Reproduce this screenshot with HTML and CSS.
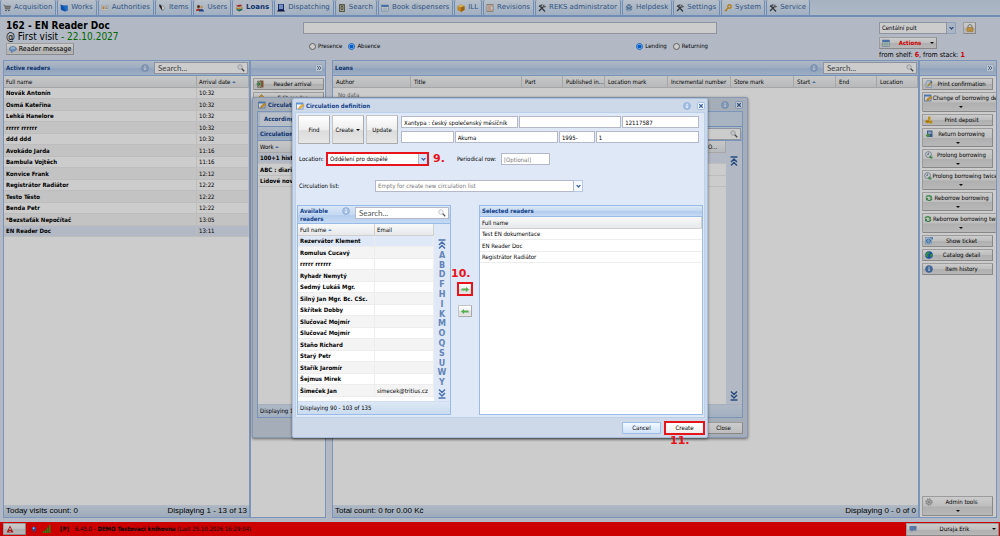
FILE: index.html
```html
<!DOCTYPE html>
<html lang="en">
<head>
<meta charset="utf-8">
<title>Loans</title>
<link rel="stylesheet" href="styles.css">
</head>
<body>
<svg class="sprite" aria-hidden="true">
  <symbol id="cart" viewBox="0 0 16 16"><path d="M1 2h2l2 8h8l2-6H4" fill="#9a9a9a" stroke="#777" stroke-width="1.5"/><circle cx="6" cy="13" r="1.6" fill="#555"/><circle cx="12" cy="13" r="1.6" fill="#555"/></symbol>
  <symbol id="folder" viewBox="0 0 16 16"><path d="M1 1l6 2 8 0v10l-5 2L2 12z" fill="#1267d8"/><path d="M1 1l5 4 9-2v10l-5 2-1-8z" fill="#2a86f0"/></symbol>
  <symbol id="card" viewBox="0 0 16 16"><rect x="1" y="3" width="14" height="10" fill="#f6f0e0" stroke="#b9c4d6"/><rect x="3" y="5" width="4" height="5" fill="#e09a55"/><path d="M9 6h4M9 9h4" stroke="#6c93c9" stroke-width="1.5"/></symbol>
  <symbol id="pen" viewBox="0 0 16 16"><path d="M2 1l4 1 6 8-3 4-6-8z" fill="#333"/><path d="M7 2l7 6-5 6" fill="#fff" stroke="#888"/></symbol>
  <symbol id="users" viewBox="0 0 16 16"><circle cx="5" cy="5" r="3" fill="#6b3c1c"/><path d="M0 14c0-7 10-7 10 0z" fill="#d1402a"/><circle cx="11" cy="6" r="3" fill="#e8b87e"/><path d="M6 15c0-7 10-7 10 0z" fill="#2c55a8"/></symbol>
  <symbol id="books" viewBox="0 0 16 16"><path d="M2 3l9-2 4 3-9 2z" fill="#c43c2c"/><path d="M2 6l4 2 9-2v2l-9 3-4-2z" fill="#e9a832"/><path d="M3 9l4 2 8-2v3l-7 3-5-3z" fill="#2f7f6c"/></symbol>
  <symbol id="monitor" viewBox="0 0 16 16"><rect x="2" y="0" width="12" height="12" fill="#26388c"/><rect x="4" y="1" width="8" height="9" fill="#8eb2e8"/><path d="M0 15l2-3h12l2 3z" fill="#111c46"/></symbol>
  <symbol id="cabinet" viewBox="0 0 16 16"><rect x="2" y="0" width="12" height="16" rx="1" fill="#73735f"/><path d="M4 3h8v4H4zM4 9h8v5H4z" fill="#c4c5aa"/><path d="M6 5h4M6 11h4" stroke="#444" stroke-width="1.5"/></symbol>
  <symbol id="table" viewBox="0 0 16 16"><rect x="1" y="2" width="14" height="12" fill="#fff" stroke="#7593bb"/><path d="M1 2h14v4H1z" fill="#5c8dcc"/><path d="M1 10h14M6 6v8M10 6v8" stroke="#8da9cf"/></symbol>
  <symbol id="calendar" viewBox="0 0 16 16"><rect x="1" y="2" width="14" height="13" fill="#cfe6cf" stroke="#7593bb"/><path d="M1 2h14v4H1z" fill="#5c8dcc"/><path d="M1 10h14M6 6v9M10 6v9" stroke="#8da9cf"/></symbol>
  <symbol id="box" viewBox="0 0 16 16"><path d="M1 4l7-3 7 3v8l-7 4-7-4z" fill="#e9a52b"/><path d="M1 4l7 3 7-3-7-3z" fill="#ffdc79"/><path d="M8 7v9l7-4V4z" fill="#c57b18"/></symbol>
  <symbol id="doc" viewBox="0 0 16 16"><rect x="2" y="1" width="12" height="14" fill="#fff" stroke="#9b8a78" stroke-width="1.5"/><path d="M4 4h8M4 8h6M4 12h8" stroke="#c36f43" stroke-width="1.6"/></symbol>
  <symbol id="tools" viewBox="0 0 16 16"><path d="M2 14L12 4M3 3l11 12" stroke="#45484e" stroke-width="2.6"/><path d="M1 5l5-4 4 0-5 6z" fill="#555b64"/><path d="M10 5a3 3 0 0 1 3-4l0 3 3 0a3 3 0 0 1-4 3z" fill="#777"/></symbol>
  <symbol id="help" viewBox="0 0 16 16"><circle cx="8" cy="8" r="7" fill="#a8c1de"/><path d="M2 5l5 3-3 4M14 5L9 8l4 4M5 2h6" stroke="#49759f" stroke-width="2" fill="none"/></symbol>
  <symbol id="key" viewBox="0 0 16 16"><circle cx="11" cy="5" r="3.5" fill="none" stroke="#e0a020" stroke-width="2.6"/><path d="M8 8l-6 6M4 12l2 2" stroke="#e0a020" stroke-width="2.6"/></symbol>
  <symbol id="bubble" viewBox="0 0 16 16"><path d="M8 3c9 0 9 9 1 9l-4 3v-3c-7-1-6-9 3-9z" fill="#86b8ea" stroke="#3b70ad"/><path d="M4 6h8" stroke="#e9f5ff" stroke-width="2"/></symbol>
  <symbol id="info" viewBox="0 0 16 16"><circle cx="8" cy="8" r="7" fill="#a4bfe3" stroke="#7b9fcf"/><path d="M8 7v5M8 3.5v2" stroke="#fff" stroke-width="2.4"/></symbol>
  <symbol id="infodark" viewBox="0 0 16 16"><circle cx="8" cy="8" r="7" fill="#5583c3" stroke="#426ba8"/><path d="M8 7v5M8 3.5v2" stroke="#fff" stroke-width="2.4"/></symbol>
  <symbol id="lens" viewBox="0 0 16 16"><circle cx="6" cy="6" r="4.5" fill="#f3f8fd" stroke="#b1b1b1" stroke-width="1.4"/><path d="M9.500 9.500l5 5" stroke="#555" stroke-width="2.6"/></symbol>
  <symbol id="edit" viewBox="0 0 16 16"><rect x="1" y="2" width="13" height="12" fill="#fff" stroke="#4e7fbd" stroke-width="1.4"/><path d="M1 2h13v3H1z" fill="#5f94d6"/><path d="M5 14l1-4 7-6 3 3-7 6z" fill="#eeb03c" stroke="#b87818" stroke-width=".7"/></symbol>
  <symbol id="pencil" viewBox="0 0 16 16"><path d="M1 15l2-6 8-8 4 4-8 8z" fill="#f0b640" stroke="#a87516"/></symbol>
  <symbol id="door" viewBox="0 0 16 16"><path d="M8 1h7v14H8z" fill="#a06e3d"/><path d="M3 2h7v13H3z" fill="#b9b39c" stroke="#776"/><path d="M1 8h6M4 5l4 3-4 4" stroke="#2d9440" stroke-width="2" fill="none"/></symbol>
  <symbol id="close" viewBox="0 0 16 16"><rect x="1" y="1" width="14" height="14" rx="3" fill="#f3f8ff" stroke="#8cafe0" stroke-width="1.4"/><path d="M4.500 4.500l7 7M11.500 4.500l-7 7" stroke="#37629f" stroke-width="2.4"/></symbol>
  <symbol id="expand" viewBox="0 0 16 16"><rect x="1" y="1" width="14" height="14" rx="2" fill="#edf4fd" stroke="#a5c1e6"/><path d="M4 4l4 4-4 4M8 4l4 4-4 4" fill="none" stroke="#43699f" stroke-width="1.6"/></symbol>
  <symbol id="down" viewBox="0 0 10 6"><path d="M0 0h3l2 2 2-2h3L5 6z" fill="#3c5f98"/></symbol>
  <symbol id="lock" viewBox="0 0 16 16"><path d="M4 8V5a4 4 0 0 1 8 0v3" fill="none" stroke="#999" stroke-width="2"/><rect x="2" y="7" width="12" height="8" rx="1" fill="#e9b44c" stroke="#b98527"/></symbol>
  <symbol id="print" viewBox="0 0 16 16"><path d="M4 1h9v14H2V4z" fill="#d9e8f8" stroke="#7f9fc4"/><path d="M4 13l2-4 6-6 3 2-7 7z" fill="#d2a53b"/><path d="M10 2l5 2-2 3z" fill="#3e74ba"/></symbol>
  <symbol id="coins" viewBox="0 0 16 16"><path d="M6 1h5v7H6z" fill="#f3c231"/><ellipse cx="5" cy="11" rx="4.500" ry="3.500" fill="#e4a416"/><ellipse cx="11" cy="12" rx="4.500" ry="3.500" fill="#f1bc31"/><path d="M2 11h6M8 12h6M7 4h3" stroke="#b67c0d"/></symbol>
  <symbol id="return" viewBox="0 0 16 16"><rect x="4" y="1" width="11" height="13" rx="1" fill="#4770aa"/><path d="M6 3h7v5H6z" fill="#a9c6e9"/><path d="M1 11l5-4v2h4v4H6v2z" fill="#63ad5a"/></symbol>
  <symbol id="clock" viewBox="0 0 16 16"><circle cx="7" cy="7" r="6" fill="#eef3f8" stroke="#8b99ab" stroke-width="1.6"/><path d="M7 3v4H4" fill="none" stroke="#56677f" stroke-width="1.2"/><path d="M8 12l4-4v3h3v4h-5z" fill="#5aa865"/></symbol>
  <symbol id="cycle" viewBox="0 0 16 16"><path d="M1 7c1-6 9-6 11-3l2-1v6H9l2-2c-2-3-6-3-7 0z" fill="#5daf68"/><path d="M15 9c-1 6-9 6-11 3l-2 1V8h5l-2 2c2 3 6 2 7-1z" fill="#4a9957"/></symbol>
  <symbol id="ticket" viewBox="0 0 16 16"><rect x="1" y="1" width="12" height="13" fill="#d4e8fc" stroke="#6da0da"/><circle cx="7" cy="8" r="4" fill="none" stroke="#327bca" stroke-width="1.8"/><path d="M3 8h8M10 2l5-1v4" stroke="#327bca" stroke-width="1.5" fill="none"/></symbol>
  <symbol id="globe" viewBox="0 0 16 16"><circle cx="8" cy="8" r="7.500" fill="#1c66cb"/><path d="M3 3l5-2 1 4-3 2 1 4-3 2-3-5zM10 7l4-2 1 4-4 5z" fill="#45b04f"/></symbol>
  <symbol id="gear" viewBox="0 0 16 16"><circle cx="8" cy="8" r="5" fill="#d6d6d6" stroke="#999" stroke-width="1.500"/><circle cx="8" cy="8" r="6.500" fill="none" stroke="#999" stroke-width="2" stroke-dasharray="2.500 2.600"/><circle cx="8" cy="8" r="2" fill="#999"/></symbol>
  <symbol id="first" viewBox="0 0 16 20"><path d="M1 2h14M2 12l6-6 6 6M2 19l6-6 6 6" fill="none" stroke="currentColor" stroke-width="3"/></symbol>
  <symbol id="last" viewBox="0 0 16 20"><path d="M1 18h14M2 8l6 6 6-6M2 1l6 6 6-6" fill="none" stroke="currentColor" stroke-width="3"/></symbol>
  <symbol id="right" viewBox="0 0 16 10"><path d="M1 3h9V0l6 5-6 5V7H1z" fill="#55ae52"/></symbol>
  <symbol id="left" viewBox="0 0 16 10"><path d="M15 3H6V0L0 5l6 5V7h9z" fill="#55ae52"/></symbol>
  <symbol id="warn" viewBox="0 0 16 16"><path d="M8 1l7 14H1z" fill="#d22626"/><path d="M8 6v4M8 12v2" stroke="#fff" stroke-width="2"/></symbol>
  <symbol id="pin" viewBox="0 0 16 16"><circle cx="8" cy="6" r="5" fill="#3b5fc4"/><circle cx="7" cy="5" r="2" fill="#dbe5ff"/><path d="M8 10v5" stroke="#3b4f92" stroke-width="3"/></symbol>
  <symbol id="signal" viewBox="0 0 16 16"><path d="M0 12h3v4H0zM4 9h3v7H4zM8 5h3v11H8zM12 0h3v16h-3z" fill="#2ea117"/></symbol>
  <symbol id="chat" viewBox="0 0 16 16"><path d="M1 2h14v9H8l-3 4v-4H1z" fill="#6f94cc"/></symbol>
</svg>

<div class="app">
  <nav class="tabs">
    <a class="tab" href="#"><svg><use href="#cart"/></svg>Acquisition</a>
    <a class="tab" href="#"><svg><use href="#folder"/></svg>Works</a>
    <a class="tab" href="#"><svg><use href="#card"/></svg>Authorities</a>
    <a class="tab" href="#"><svg><use href="#pen"/></svg>Items</a>
    <a class="tab" href="#"><svg><use href="#users"/></svg>Users</a>
    <a class="tab active" href="#"><svg><use href="#books"/></svg>Loans</a>
    <a class="tab" href="#"><svg><use href="#monitor"/></svg>Dispatching</a>
    <a class="tab" href="#"><svg><use href="#cabinet"/></svg>Search</a>
    <a class="tab" href="#"><svg><use href="#table"/></svg>Book dispensers</a>
    <a class="tab" href="#"><svg><use href="#box"/></svg>ILL</a>
    <a class="tab" href="#"><svg><use href="#doc"/></svg>Revisions</a>
    <a class="tab" href="#"><svg><use href="#tools"/></svg>REKS administrator</a>
    <a class="tab" href="#"><svg><use href="#help"/></svg>Helpdesk</a>
    <a class="tab" href="#"><svg><use href="#tools"/></svg>Settings</a>
    <a class="tab" href="#"><svg><use href="#key"/></svg>System</a>
    <a class="tab" href="#"><svg><use href="#tools"/></svg>Service</a>
  </nav>

  <header class="top">
    <div class="reader">
      <h1>162 - EN Reader Doc</h1>
      <p>@ First visit <span class="ok">- 22.10.2027</span></p>
      <button class="btn message"><svg><use href="#bubble"/></svg>Reader message</button>
    </div>
    <div class="lookup">
      <input class="field" type="text" aria-label="Code">
      <div class="modes">
        <div class="mode"><label><input type="radio" name="place">Presence</label><label><input type="radio" name="place" checked>Absence</label></div>
        <div class="mode"><label><input type="radio" name="kind" checked>Lending</label><label><input type="radio" name="kind">Returning</label></div>
      </div>
    </div>
    <div class="desk">
      <div class="desk-row">
        <span class="combo"><select class="field" aria-label="Desk"><option>Centální pult</option></select><span class="trigger"><svg><use href="#down"/></svg></span></span>
        <button class="btn lock" aria-label="Lock"><svg><use href="#lock"/></svg></button>
      </div>
      <button class="btn actions"><svg><use href="#calendar"/></svg><span>Actions</span><i class="caret"></i></button>
      <p>from shelf: <b>6</b>, from stack: <b>1</b></p>
    </div>
  </header>

  <main class="work">
    <section class="panel readers">
      <div class="bar"><h2>Active readers</h2><svg class="ico"><use href="#info"/></svg><span class="search"><input type="text" placeholder="Search..." aria-label="Search readers"><svg><use href="#lens"/></svg></span></div>
      <div class="fill">
        <table class="grid striped">
          <colgroup><col><col class="w-arrival"></colgroup>
          <thead><tr><th>Full name</th><th>Arrival date <i class="sort"></i></th></tr></thead>
          <tbody>
            <tr><td>Novák Antonín</td><td>10:32</td></tr>
            <tr><td>Osmá Kateřina</td><td>10:32</td></tr>
            <tr><td>Lehká Hanelore</td><td>10:32</td></tr>
            <tr><td>rrrrr rrrrrr</td><td>10:32</td></tr>
            <tr><td>ddd ddd</td><td>10:32</td></tr>
            <tr><td>Avokádo Jarda</td><td>11:16</td></tr>
            <tr><td>Bambula Vojtěch</td><td>11:16</td></tr>
            <tr><td>Konvice Frank</td><td>12:12</td></tr>
            <tr><td>Registrátor Radiátor</td><td>12:22</td></tr>
            <tr><td>Testo Těsto</td><td>12:22</td></tr>
            <tr><td>Benda Petr</td><td>12:22</td></tr>
            <tr><td>*Bezstaťák Nepočítač</td><td>13:05</td></tr>
            <tr class="selected"><td>EN Reader Doc</td><td>13:11</td></tr>
          </tbody>
        </table>
      </div>
      <div class="foot"><span>Today visits count: 0</span><span>Displaying 1 - 13 of 13</span></div>
    </section>

    <section class="panel side reader-tools">
      <div class="bar"><svg class="ico end"><use href="#expand"/></svg></div>
      <div class="fill stack">
        <button class="btn tool"><svg><use href="#door"/></svg><span>Reader arrival</span></button>
        <button class="btn tool"><svg><use href="#pencil"/></svg><span>Edit reader</span></button>
      </div>
    </section>

    <section class="panel loans">
      <div class="bar"><h2>Loans</h2><svg class="ico"><use href="#info"/></svg><span class="search"><input type="text" placeholder="Search..." aria-label="Search loans"><svg><use href="#lens"/></svg></span></div>
      <div class="fill">
        <table class="grid lined">
          <colgroup><col class="w-author"><col><col class="w-part"><col class="w-date"><col class="w-mark"><col class="w-mark"><col class="w-mark"><col class="w-date"><col class="w-part"><col class="w-part"></colgroup>
          <thead><tr><th>Author</th><th>Title</th><th>Part</th><th>Published in...</th><th>Location mark</th><th>Incremental number</th><th>Store mark</th><th>Start <i class="sort"></i></th><th>End</th><th>Location</th></tr></thead>
        </table>
        <p class="empty">No data</p>
      </div>
      <div class="foot"><span>Total count: 0 for 0.00 Kč</span><span>Displaying 0 - 0 of 0</span></div>
    </section>

    <section class="panel side loan-tools">
      <div class="bar"><svg class="ico end"><use href="#expand"/></svg></div>
      <div class="fill stack">
        <button class="btn tool"><svg><use href="#print"/></svg><span>Print confirmation</span></button>
        <button class="btn tool menu wide"><svg><use href="#edit"/></svg><span>Change of borrowing de</span><i class="caret"></i></button>
        <button class="btn tool"><svg><use href="#coins"/></svg><span>Print deposit</span></button>
        <button class="btn tool menu"><svg><use href="#return"/></svg><span>Return borrowing</span><i class="caret"></i></button>
        <button class="btn tool menu"><svg><use href="#clock"/></svg><span>Prolong borrowing</span><i class="caret"></i></button>
        <button class="btn tool menu wide"><svg><use href="#clock"/></svg><span>Prolong borrowing twice</span><i class="caret"></i></button>
        <button class="btn tool menu"><svg><use href="#cycle"/></svg><span>Reborrow borrowing</span><i class="caret"></i></button>
        <button class="btn tool menu wide"><svg><use href="#cycle"/></svg><span>Reborrow borrowing twi</span><i class="caret"></i></button>
        <button class="btn tool"><svg><use href="#ticket"/></svg><span>Show ticket</span></button>
        <button class="btn tool"><svg><use href="#globe"/></svg><span>Catalog detail</span></button>
        <button class="btn tool"><svg><use href="#infodark"/></svg><span>Item history</span></button>
        <button class="btn tool menu last"><svg><use href="#gear"/></svg><span>Admin tools</span><i class="caret"></i></button>
      </div>
    </section>
  </main>

  <footer class="status">
    <button class="btn alert" aria-label="Alerts"><svg><use href="#warn"/></svg></button>
    <svg class="pin"><use href="#pin"/></svg>
    <svg class="signal"><use href="#signal"/></svg>
    <b>[P]</b>
    <span class="build">6.45.0 - <b>DEMO Testovací knihovna</b> (Last 25.10.2026 16:29:04)</span>
    <button class="btn account"><svg><use href="#chat"/></svg><span>Duraja Erik</span><i class="caret"></i></button>
  </footer>
</div>

<section class="window back">
  <div class="title"><svg class="ico"><use href="#edit"/></svg><h2>Circulatio</h2><svg class="ico"><use href="#info"/></svg><button class="plain" aria-label="Close"><svg class="ico"><use href="#close"/></svg></button></div>
  <div class="back-body">
    <div class="subtabs"><a href="#">According</a></div>
    <div class="bar"><h2>Circulation</h2><span class="search"><input type="text" aria-label="Search circulation"><svg><use href="#lens"/></svg></span></div>
    <div class="back-main">
      <table class="grid">
        <colgroup><col><col class="w-more"></colgroup>
        <thead><tr><th>Work <i class="sort"></i></th><th>O...</th></tr></thead>
        <tbody>
          <tr class="selected"><td>100+1 hist</td><td></td></tr>
          <tr><td>ABC : diario</td><td></td></tr>
          <tr><td>Lidové novi</td><td></td></tr>
        </tbody>
      </table>
      <div class="jump"><svg><use href="#first"/></svg><svg><use href="#last"/></svg></div>
    </div>
    <div class="pager">Displaying 1</div>
  </div>
  <div class="window-foot"><button class="btn action">Close</button></div>
</section>

<div class="mask"></div>

<section class="window front" role="dialog" aria-label="Circulation definition">
  <div class="title"><svg class="ico"><use href="#edit"/></svg><h2>Circulation definition</h2><svg class="ico"><use href="#info"/></svg><button class="plain" aria-label="Close dialog"><svg class="ico"><use href="#close"/></svg></button></div>
  <div class="front-body">
    <div class="work-form">
      <button class="btn big">Find</button>
      <button class="btn big">Create<i class="caret"></i></button>
      <button class="btn big">Update</button>
      <div class="work-fields">
        <div class="line names"><input class="field" aria-label="Title" value="Xantypa : český společenský měsíčník"><input class="field" aria-label="Subtitle"><input class="field" aria-label="ISSN" value="12117587"></div>
        <div class="line details"><input class="field" aria-label="Author"><input class="field" aria-label="Publisher" value="Akuma"><input class="field" aria-label="Year" value="1995-"><input class="field" aria-label="Volume" value="1"></div>
      </div>
    </div>
    <div class="row place">
      <label for="location">Location:</label>
      <span class="combo marked"><select class="field" id="location"><option>Oddělení pro dospělé</option></select><span class="trigger"><svg><use href="#down"/></svg></span></span>
      <strong class="step">9.</strong>
      <label for="period">Periodical row:</label>
      <input class="field period" id="period" placeholder="[Optional]">
    </div>
    <div class="row list">
      <label for="list">Circulation list:</label>
      <span class="combo"><select class="field hint" id="list"><option>Empty for create new circulation list</option></select><span class="trigger light"><svg><use href="#down"/></svg></span></span>
    </div>
    <div class="transfer">
      <section class="box available">
        <div class="bar tall"><h2>Available readers</h2><svg class="ico"><use href="#info"/></svg><span class="search"><input type="text" placeholder="Search..." aria-label="Search available readers"><svg><use href="#lens"/></svg></span></div>
        <div class="available-main">
          <table class="grid striped">
            <colgroup><col><col class="w-email"></colgroup>
            <thead><tr><th>Full name <i class="sort"></i></th><th>Email</th></tr></thead>
            <tbody>
              <tr class="selected"><td>Rezervátor Klement</td><td></td></tr>
              <tr><td>Romulus Cucavý</td><td></td></tr>
              <tr><td>rrrrr rrrrrr</td><td></td></tr>
              <tr><td>Ryhadr Nemytý</td><td></td></tr>
              <tr><td>Sedmý Lukáš Mgr.</td><td></td></tr>
              <tr><td>Silný Jan Mgr. Bc. CSc.</td><td></td></tr>
              <tr><td>Skřítek Dobby</td><td></td></tr>
              <tr><td>Slučovač Mojmír</td><td></td></tr>
              <tr><td>Slučovač Mojmír</td><td></td></tr>
              <tr><td>Staňo Richard</td><td></td></tr>
              <tr><td>Starý Petr</td><td></td></tr>
              <tr><td>Stařík Jaromír</td><td></td></tr>
              <tr><td>Šejmus Mirek</td><td></td></tr>
              <tr><td>Šimeček Jan</td><td>simecek@tritius.cz</td></tr>
            </tbody>
          </table>
          <div class="jump letters"><svg><use href="#first"/></svg><span>A</span><span>B</span><span>D</span><span>F</span><span>H</span><span>I</span><span>K</span><span>M</span><span>O</span><span>Q</span><span>S</span><span>U</span><span>W</span><span>Y</span><svg><use href="#last"/></svg></div>
        </div>
        <div class="pager">Displaying 90 - 103 of 135</div>
      </section>
      <div class="movers">
        <strong class="step">10.</strong>
        <button class="btn move marked" aria-label="Add reader"><svg><use href="#right"/></svg></button>
        <button class="btn move" aria-label="Remove reader"><svg><use href="#left"/></svg></button>
      </div>
      <section class="box chosen">
        <div class="bar"><h2>Selected readers</h2></div>
        <table class="grid light">
          <thead><tr><th>Full name</th></tr></thead>
          <tbody><tr><td>Test EN dokumentace</td></tr><tr><td>EN Reader Doc</td></tr><tr><td>Registrátor Radiátor</td></tr></tbody>
        </table>
      </section>
    </div>
  </div>
  <div class="window-foot">
    <button class="btn action focus">Cancel</button>
    <span class="final"><button class="btn action marked">Create</button><strong class="step below">11.</strong></span>
  </div>
</section>
</body>
</html>
```

FILE: styles.css
```css
* { box-sizing: border-box; }
html, body { height: 100%; }
body {
  margin: 0;
  overflow: hidden;
  position: relative;
  background: #dfe8f6;
  color: #000;
  font: 6px/8px "DejaVu Sans Condensed", "DejaVu Sans", sans-serif;
}
h1, h2, p { margin: 0; }
button, input, select { font: inherit; color: inherit; margin: 0; min-width: 0; }
a { color: inherit; text-decoration: none; }
svg { flex: none; width: 8px; height: 8px; }
.sprite { position: absolute; width: 0; height: 0; }
.app { display: flex; flex-direction: column; height: 100%; }

/* tabs */
.tabs {
  display: flex;
  gap: 1px;
  height: 17px;
  border-bottom: 2px solid #8db2e3;
  background: linear-gradient(#cfdef2, #dbe7f7);
  font: 7px/9px "DejaVu Sans", sans-serif;
  flex: none;
}
.tab {
  display: flex;
  align-items: center;
  gap: 3px;
  padding: 0 3px 0 2px;
  border: 1px solid #8db2e3;
  border-width: 0 1px;
  border-radius: 2px 2px 0 0;
  background: linear-gradient(#e6f0fc, #c9dcf3);
  color: #416aa3;
  white-space: nowrap;
}
.tab.active { color: #15428b; font-weight: bold; background: #dfe8f6; }

/* buttons and fields */
.btn {
  display: flex;
  align-items: center;
  justify-content: center;
  padding: 0 2px;
  border: 1px solid #c4c4c4;
  border-right-color: #aaa;
  border-bottom-color: #aaa;
  border-radius: 1px;
  background: linear-gradient(#fff, #eee 50%, #dcdcdc 55%, #e6e6e6);
  white-space: nowrap;
}
.plain { display: flex; padding: 0; border: 0; background: none; }
.caret { border: 2px solid transparent; border-top-color: #111; border-bottom: 0; }
.field {
  height: 12px;
  padding: 0 2px;
  border: 1px solid #b5b8c8;
  border-radius: 0;
  background: #fff;
  outline: 0;
}
.combo { display: flex; height: 12px; }
.combo select { flex: 1; appearance: none; height: auto; }
.combo .trigger {
  display: flex;
  align-items: center;
  justify-content: center;
  width: 9px;
  border: 1px solid #b5c8e4;
  border-left: 0;
  background: #d5e4f8;
}
.combo .trigger.light { background: #f4f7fb; }
.combo .trigger svg { width: 5px; height: 3px; }
.marked { outline: 2px solid #e8141c; outline-offset: -1px; border-radius: 0; }
.step { color: #e8141c; font: bold 11px/12px "DejaVu Sans", sans-serif; }

/* page header */
.top { display: flex; padding: 3px 20px 0 6px; height: 43px; flex: none; }
.reader { flex: 0 0 297px; }
.reader h1 { font-size: 10px; line-height: 11px; }
.reader p { font-size: 10px; line-height: 12px; }
.ok { color: #008000; }
.message { width: 68px; height: 12px; gap: 2px; font-size: 7px; }
.lookup { flex: 0 1 414px; padding-top: 2px; }
.lookup .field { width: 100%; display: block; }
.modes { display: flex; justify-content: space-between; padding: 8px 9px 0 6px; }
.mode { display: flex; gap: 6px; }
.mode label { display: flex; align-items: center; gap: 2px; }
.mode input { width: 7px; height: 7px; }
.desk { margin-left: auto; width: 101px; padding-top: 2px; }
.desk-row { display: flex; gap: 7px; }
.desk .combo { width: 77px; }
.lock { width: 13px; height: 12px; }
.actions { width: 58px; height: 12px; margin: 3px 0 2px; color: #f00; font-weight: bold; }
.actions span { flex: 1; }
.desk p { font-size: 7px; white-space: nowrap; }
.desk b { color: #f00; }

/* work area */
.work { flex: 1; min-height: 0; display: flex; padding: 0 3px 4px; }
.panel { display: flex; flex-direction: column; border: 1px solid #99bbe8; min-width: 0; }
.readers { flex: 0 0 247px; }
.reader-tools { flex: 0 0 76px; margin-right: 6px; }
.loans { flex: 1; }
.loan-tools { flex: 0 0 78px; }
.bar {
  display: flex;
  align-items: center;
  flex: none;
  height: 15px;
  padding: 0 1px 0 2px;
  border-bottom: 1px solid #99bbe8;
  background: linear-gradient(#dae7f6, #c5d9f1 50%, #b4cdee 55%, #c6daf3);
}
h2 { flex: 1; font-size: 6px; line-height: 8px; color: #15428b; }
.ico { width: 8px; height: 8px; }
.ico.end { margin: 0 1px 0 auto; }
.search {
  display: flex;
  align-items: center;
  width: 94px;
  height: 12px;
  margin-left: 5px;
  padding: 0 2px;
  border: 1px solid #b5b8c8;
  background: #fff;
}
.search input { flex: 1; padding: 0 1px; border: 0; outline: 0; background: none; font: 8px/10px Lato, sans-serif; }
.search input::placeholder { color: #555; }
.fill { flex: 1; min-height: 0; background: #fff; overflow: hidden; }
.stack { display: flex; flex-direction: column; align-items: flex-start; gap: 2px; padding: 2px 0 1px 2px; }
.foot {
  display: flex;
  justify-content: space-between;
  align-items: center;
  flex: none;
  height: 12px;
  padding: 0 2px;
  background: linear-gradient(#dce8f6, #c5d6ea);
  font: 8px/10px "Liberation Sans", sans-serif;
}
.tool { display: grid; grid-template-columns: 8px 1fr; width: 71px; height: 12px; padding: 0 2px; flex: none; }
.tool span { text-align: center; }
.tool.menu { height: 19px; grid-template-rows: 10px 7px; }
.tool.menu .caret { grid-column: 1 / 3; justify-self: center; }
.tool.menu.wide { height: 20px; width: 74px; padding-right: 0; border-right: 0; }
.tool.wide span { text-align: left; padding-left: 1px; }
.tool.menu.last { height: 20px; margin-top: auto; }
.empty { padding: 3px 5px; color: #777; }

/* grids */
.grid { width: 100%; table-layout: fixed; border-collapse: separate; border-spacing: 0; background: #fff; }
.grid th, .grid td { padding: 0 2px; text-align: left; white-space: nowrap; overflow: hidden; line-height: 8px; }
.grid th {
  height: 12px;
  border-right: 1px solid #d0d0d0;
  border-bottom: 1px solid #d0d0d0;
  background: linear-gradient(#f9f9f9, #e6e8ea);
  font-weight: normal;
}
.grid td { height: 11px; border-bottom: 1px solid #ededed; }
.grid tr:nth-child(even) td { height: 12px; }
.grid td:first-child { font-weight: bold; }
.grid.light td:first-child { font-weight: normal; }
.grid.striped td { border-right: 1px solid #ededed; }
.grid.striped tr:nth-child(even) td { background: #f4f4f4; }
.grid .selected td, .grid.striped .selected td { background: #dfe8f6; }
.sort { display: inline-block; border: 2px solid transparent; border-bottom-color: #5d8dcc; border-top: 0; vertical-align: middle; }
.grid.lined th { padding-left: 3px; }
.w-arrival { width: 52px; }
.w-author { width: 78px; }
.w-part { width: 41px; }
.w-mark { width: 63px; }
.w-date { width: 42px; }
.w-email { width: 59px; }
.w-more { width: 20px; }

/* status bar */
.status {
  display: flex;
  align-items: center;
  flex: none;
  height: 14px;
  padding: 0 1px 0 3px;
  background: #f00;
}
.alert { width: 23px; height: 12px; justify-content: flex-start; margin-right: 4px; }
.pin { width: 8px; height: 7px; }
.signal { width: 10px; height: 8px; margin: 0 8px 0 4px; }
.build { margin-left: 6px; }
.account { width: 93px; height: 13px; margin-left: auto; }
.account span { flex: 1; }

.mask { position: absolute; inset: 0; background: rgba(0, 0, 0, .2); }

/* windows */
.window {
  position: absolute;
  display: flex;
  flex-direction: column;
  border: 1px solid #a9bfdc;
  border-radius: 2px;
  background: #ced9e7;
  box-shadow: 0 1px 3px rgba(0, 0, 0, .5);
}
.back { left: 252px; top: 97px; width: 496px; height: 341px; padding: 0 4px; }
.front { left: 292px; top: 98px; width: 416px; height: 340px; padding: 0 2px; background: #cdd9e9; }
.title { display: flex; align-items: center; gap: 2px; height: 13px; flex: none; padding: 0 0 0 1px; }
.title .plain { margin-left: 4px; }
.window-foot { display: flex; align-items: center; justify-content: flex-end; gap: 4px; flex: 0 0 19px; }
.front .window-foot { padding-right: 1px; }
.action { width: 39px; height: 12px; background: linear-gradient(#fff, #eee); }
.back-body, .front-body { flex: 1; min-height: 0; display: flex; flex-direction: column; border: 1px solid #99bbe8; background: #dfe8f6; }
.subtabs { display: flex; height: 15px; flex: none; padding: 1px 2px 0; border-bottom: 1px solid #8db2e3; color: #15428b; font-weight: bold; background: #d4e2f4; }
.subtabs a { padding: 2px 4px; border-radius: 2px 2px 0 0; background: #e6effa; }
.back-body .bar { height: 14px; }
.back-main { flex: 1; display: flex; align-items: stretch; background: #fff; min-height: 0; }
.back-main .grid { align-self: flex-start; flex: 1; }
.jump {
  display: flex;
  flex-direction: column;
  justify-content: space-between;
  align-items: center;
  width: 16px;
  flex: none;
  padding: 14px 0 2px;
  background: #dfe8f6;
  color: #34609f;
}
.jump svg { height: 12px; width: 8px; }
.pager { display: flex; align-items: center; height: 13px; flex: none; padding: 0 2px; border-top: 1px solid #d0def0; background: linear-gradient(#dbe7f6, #cbdcf0); }

/* dialog */
.front-body { padding: 0 1px 2px 0; border-color: #bdd0ea; }
.work-form { display: flex; gap: 2px; padding: 2px 0 0 2px; }
.big { width: 32px; height: 29px; gap: 3px; }
.work-fields { flex: 1; display: grid; gap: 3px; padding: 1px 4px 0 1px; align-content: start; }
.line { display: grid; gap: 1px; }
.line .field { width: 100%; }
.names { grid-template-columns: 117fr 103fr 77fr; }
.details { grid-template-columns: 53fr 104fr 36fr 104fr; }
.row { display: flex; align-items: center; height: 12px; padding-left: 3px; }
.place { margin-top: 9px; }
.place label { width: 28px; }
.place .combo { width: 101px; }
.place .step { width: 29px; padding-left: 5px; }
.place .step + label { width: 44px; }
.place .field.period { width: 49px; }
.row .hint { color: #777; }
.list { margin: 15px 0 13px; }
.list label { width: 76px; }
.list .combo { width: 208px; }
.transfer { flex: 1; min-height: 0; display: flex; padding-left: 1px; }
.box { display: flex; flex-direction: column; border: 1px solid #99bbe8; background: #fff; }
.available { flex: 0 0 154px; }
.chosen { flex: 1; }
.available .tall { height: 18px; align-items: flex-start; padding: 1px 1px 0 2px; }
.chosen .bar { height: 11px; }
.available-main { flex: 1; display: flex; min-height: 0; }
.available-main .grid { flex: 1; align-self: flex-start; }
.letters { padding: 14px 0 1px; color: #6484b8; font: bold 8px/9px "DejaVu Sans", sans-serif; }
.letters svg { color: #4a70ad; }
.movers { flex: 0 0 28px; display: flex; flex-direction: column; align-items: center; padding-top: 63px; }
.movers .step { margin: 0 0 3px; align-self: flex-start; }
.move { width: 14px; height: 12px; margin-bottom: 10px; }
.move svg { width: 8px; height: 5px; }
.focus { border-color: #9dbde6; background: linear-gradient(#f2f8ff, #cfe2f8); }
.final { position: relative; }
.below { position: absolute; left: 5px; top: 13px; }
```
